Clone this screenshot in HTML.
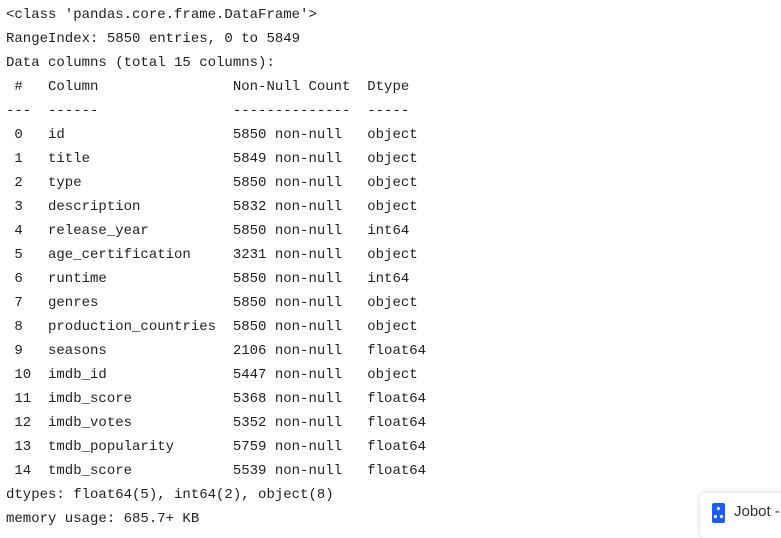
<!DOCTYPE html>
<html><head><style>
html,body{margin:0;padding:0;width:781px;height:529px;overflow:hidden;background:#fff}
pre{margin:0;position:absolute;left:6px;top:3px;font-family:"Liberation Mono",monospace;font-size:14px;line-height:24px;color:#212121}
.jb{position:absolute;left:700px;top:493px;width:100px;height:45px;background:#fff;border-radius:6px;box-shadow:0 0 6px rgba(0,0,0,0.18)}
.ic{position:absolute;left:12px;top:10px;width:13px;height:20px;background:#1a5cff;border-radius:2px}
.ic i{position:absolute;width:3px;height:3px;background:#fff;border-radius:1px}
.jt{position:absolute;left:34px;top:10px;font-family:"Liberation Sans",sans-serif;font-size:15px;color:#333}
</style></head><body>
<pre>&lt;class 'pandas.core.frame.DataFrame'&gt;
RangeIndex: 5850 entries, 0 to 5849
Data columns (total 15 columns):
 #   Column                Non-Null Count  Dtype  
---  ------                --------------  -----  
 0   id                    5850 non-null   object 
 1   title                 5849 non-null   object 
 2   type                  5850 non-null   object 
 3   description           5832 non-null   object 
 4   release_year          5850 non-null   int64  
 5   age_certification     3231 non-null   object 
 6   runtime               5850 non-null   int64  
 7   genres                5850 non-null   object 
 8   production_countries  5850 non-null   object 
 9   seasons               2106 non-null   float64
 10  imdb_id               5447 non-null   object 
 11  imdb_score            5368 non-null   float64
 12  imdb_votes            5352 non-null   float64
 13  tmdb_popularity       5759 non-null   float64
 14  tmdb_score            5539 non-null   float64
dtypes: float64(5), int64(2), object(8)
memory usage: 685.7+ KB</pre>
<div class="jb"><div class="ic"><i style="left:5px;top:4px"></i><i style="left:2px;top:12px"></i><i style="left:8px;top:12px"></i></div><div class="jt">Jobot -</div></div>
</body></html>
